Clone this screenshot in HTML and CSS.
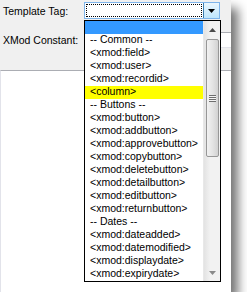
FILE: index.html
```html
<!DOCTYPE html>
<html lang="en">
<head>
  <meta charset="UTF-8" />
  <title>Template Tag</title>
  <link rel="stylesheet" href="styles.css">
</head>
<body>
  <div class="window">
    <div class="row row-tag">
      <label class="field-label">Template Tag:</label>
      <div class="select-box">
        <div class="select-value"></div>
        <div class="select-btn">
          <svg width="7" height="4" viewBox="0 0 7 4"><path d="M0 0h7L3.5 4z" fill="#000"/></svg>
        </div>
      </div>
    </div>
    <div class="row row-const">
      <label class="field-label">XMod Constant:</label>
      <div class="text-input"></div>
    </div>
    <div class="text-area"></div>

    <div class="dropdown">
      <ul class="options">
        <li class="selected">&nbsp;</li>
        <li>-- Common --</li>
        <li>&lt;xmod:field&gt;</li>
        <li>&lt;xmod:user&gt;</li>
        <li>&lt;xmod:recordid&gt;</li>
        <li class="marked">&lt;column&gt;</li>
        <li>-- Buttons --</li>
        <li>&lt;xmod:button&gt;</li>
        <li>&lt;xmod:addbutton&gt;</li>
        <li>&lt;xmod:approvebutton&gt;</li>
        <li>&lt;xmod:copybutton&gt;</li>
        <li>&lt;xmod:deletebutton&gt;</li>
        <li>&lt;xmod:detailbutton&gt;</li>
        <li>&lt;xmod:editbutton&gt;</li>
        <li>&lt;xmod:returnbutton&gt;</li>
        <li>-- Dates --</li>
        <li>&lt;xmod:dateadded&gt;</li>
        <li>&lt;xmod:datemodified&gt;</li>
        <li>&lt;xmod:displaydate&gt;</li>
        <li>&lt;xmod:expirydate&gt;</li>
      </ul>
      <div class="scrollbar">
        <div class="arrow">
          <svg width="7" height="4" viewBox="0 0 7 4"><path d="M3.5 0L7 4H0z" fill="#4a4a4a"/></svg>
        </div>
        <div class="thumb">
          <span class="grip"></span>
        </div>
        <div class="track"></div>
        <div class="arrow">
          <svg width="7" height="4" viewBox="0 0 7 4"><path d="M0 0h7L3.5 4z" fill="#8a8a8a"/></svg>
        </div>
      </div>
    </div>
  </div>
</body>
</html>
```

FILE: styles.css
```css
:root {
  --panel: #f0f0f0;
  --text: #000;
  --box-top: #abadb3;
  --box-side: #e2e3ea;
  --hilite: #3399ff;
}

* {
  box-sizing: border-box;
}

body {
  margin: 0;
  background: #fff;
  font-family: 'Liberation Sans', Arial, sans-serif;
  font-size: 10.5px;
  color: var(--text);
}

.window {
  position: relative;
  width: 231px;
  height: 292px;
  overflow: hidden;
  background: var(--panel);
  box-shadow: 7px 8px 10px rgba(0, 0, 0, 0.55);
}

.row {
  display: flex;
  align-items: center;
}

.row-tag {
  padding-top: 2px;
  height: 19px;
}

.row-const {
  margin-top: 13px;
  height: 16px;
}

.field-label {
  width: 84px;
  padding-left: 3px;
  flex-shrink: 0;
}

.select-box {
  display: flex;
  width: 136px;
  height: 17px;
  border: 1px solid #7eb4ea;
  background: #fff;
}

.select-value {
  flex: 1;
  margin: 1px;
  border: 1px dotted #000;
}

.select-btn {
  width: 16px;
  display: flex;
  align-items: center;
  justify-content: center;
  border-left: 1px solid #3c7fb1;
  background: linear-gradient(#eaf6fd, #bee6fd);
}

.text-input {
  width: 170px;
  height: 16px;
  flex-shrink: 0;
  background: #fff;
  border: 1px solid var(--box-side);
  border-top-color: var(--box-top);
}

.text-area {
  margin-top: 22px;
  width: 250px;
  height: 240px;
  background: #fff;
  border: 1px solid var(--box-side);
  border-top-color: var(--box-top);
}

/* open list of the select */
.dropdown {
  position: absolute;
  left: 84px;
  top: 20px;
  width: 137px;
  height: 262px;
  display: flex;
  border: 1px solid #000;
  background: #fff;
}

.options {
  list-style: none;
  margin: 0;
  padding: 0;
  width: 118px;
}

.options li {
  height: 13px;
  line-height: 11px;
  padding-left: 5px;
  white-space: nowrap;
}

.options li.selected {
  background: var(--hilite);
}

.options li.marked {
  background: #ffff00;
}

.scrollbar {
  width: 17px;
  display: flex;
  flex-direction: column;
  background: linear-gradient(to right, #e3e3e3, #f2f2f2 40%, #f2f2f2);
  border-left: 1px solid #e8e8e8;
}

.arrow {
  height: 17px;
  display: flex;
  align-items: center;
  justify-content: center;
}

.thumb {
  height: 118px;
  margin: 1px 1px 0 2px;
  border: 1px solid #979797;
  border-radius: 2px;
  background: linear-gradient(to right, #f2f2f2, #e4e4e4 50%, #d2d2d2);
  display: flex;
  align-items: center;
  justify-content: center;
}

.grip {
  width: 7px;
  height: 7px;
  background: repeating-linear-gradient(#6e6e6e 0 1px, #f4f4f4 1px 2px);
}

.track {
  flex: 1;
}
```
